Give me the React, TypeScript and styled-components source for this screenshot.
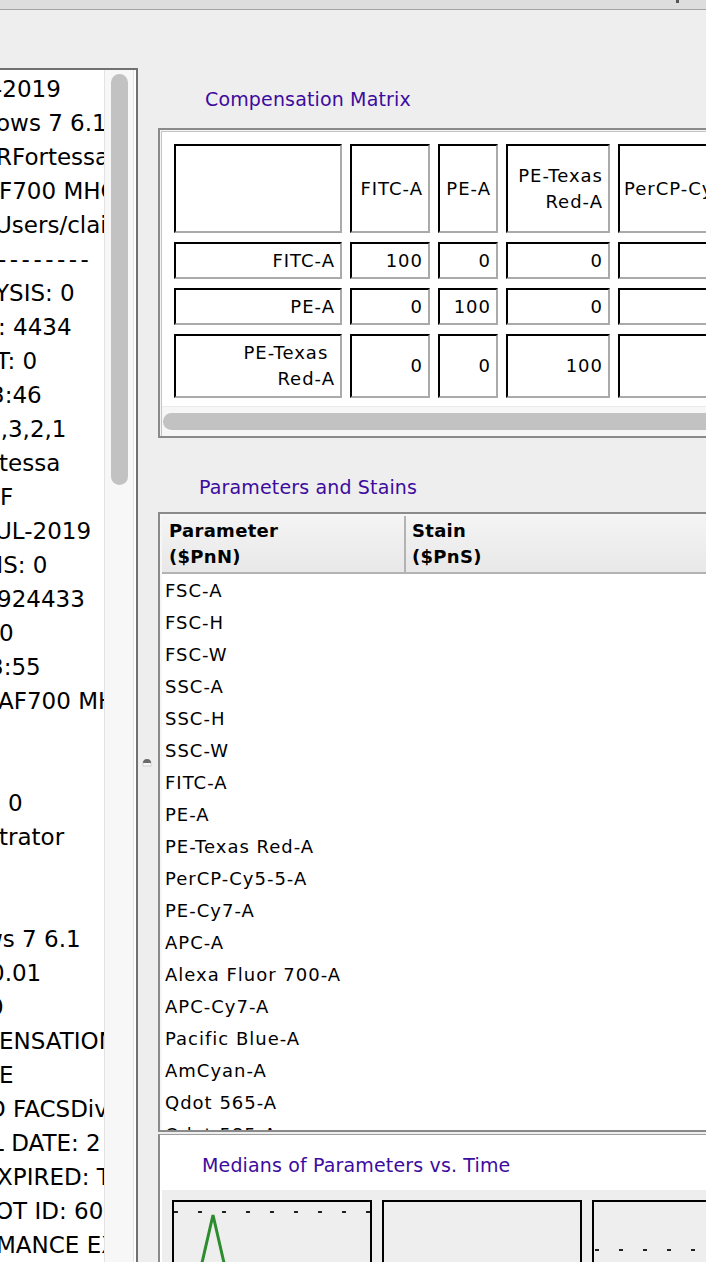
import React from "react";
import styled, { createGlobalStyle } from "styled-components";

const GlobalStyle = createGlobalStyle`
  html, body { margin: 0; padding: 0; background: #eeeeee; overflow: hidden; }
  body { font-family: "DejaVu Sans", "Liberation Sans", sans-serif; color: #000; }
`;

const PURPLE = "#3d0b9e";

const Window = styled.div`
  width: 706px;
  height: 1262px;
  overflow: hidden;
  display: flex;
  flex-direction: column;
  background: #eeeeee;
`;

const TitleStrip = styled.div`
  flex: none;
  height: 9px;
  background: #dddddd;
  border-bottom: 1px solid #a3a3a3;
  display: flex;
  justify-content: flex-end;
  padding-right: 27px;
`;

const Grip = styled.div`
  width: 3px;
  height: 3px;
  background: #555555;
`;

const Body = styled.div`
  flex: 1;
  min-height: 0;
  display: flex;
  padding-top: 58px;
`;

/* ---------- left info panel ---------- */
const InfoPanel = styled.div`
  flex: none;
  width: 138px;
  box-sizing: border-box;
  border-top: 2px solid #717171;
  border-right: 2px solid #717171;
  background: #ffffff;
  display: flex;
`;

const InfoText = styled.div`
  width: 104px;
  flex: none;
  overflow: hidden;
  padding-top: 2px;
  font-family: "DejaVu Sans", sans-serif;
  font-size: 23px;
  line-height: 34px;
`;

const InfoLine = styled.div<{ $shift: number; $spaced?: boolean }>`
  height: 34px;
  white-space: pre;
  text-indent: ${(p) => p.$shift}px;
  letter-spacing: ${(p) => (p.$spaced ? "3.5px" : "0")};
`;

const VTrack = styled.div`
  flex: none;
  width: 30px;
  box-sizing: border-box;
  background: #f7f7f7;
  border-left: 1px solid #e3e3e3;
  border-right: 1px solid #e3e3e3;
  padding: 4px 5px 0 6px;
  margin-right: 2px;
`;

const VThumb = styled.div`
  width: 17px;
  height: 411px;
  border-radius: 9px;
  background: #c2c2c2;
`;

/* ---------- split divider ---------- */
const Divider = styled.div`
  flex: none;
  width: 20px;
  padding: 690px 0 0 4px;
  box-sizing: border-box;
`;

const HandleSvg = styled.svg`
  display: block;
`;

/* ---------- right content ---------- */
const RightPane = styled.div`
  flex: 1;
  min-width: 0;
  overflow: hidden;
  display: flex;
  flex-direction: column;
  align-items: flex-start;
`;

const SectionTitle = styled.div<{ $top: number; $bottom: number; $left: number }>`
  flex: none;
  color: ${PURPLE};
  font-size: 19px;
  line-height: 24px;
  letter-spacing: 0.15px;
  white-space: nowrap;
  padding: ${(p) => `${p.$top}px 0 ${p.$bottom}px ${p.$left}px`};
`;

const MatrixPane = styled.div`
  flex: none;
  width: 640px;
  box-sizing: border-box;
  border: 2px solid #8a8a8a;
  padding: 1px 0 0 1px;
  background: #f4f4f4;
`;

const MatrixInner = styled.div`
  border-top: 1px solid #c4c4c4;
  border-left: 1px solid #c4c4c4;
  background: #ffffff;
`;

const MatrixGrid = styled.div`
  display: grid;
  grid-template-columns: 168px 80px 60px 104px 150px;
  grid-template-rows: 89px 37px 37px 64px;
  column-gap: 8px;
  row-gap: 9px;
  padding: 12px 0 8px 12px;
`;

const Cell = styled.div<{ $left?: boolean }>`
  box-sizing: border-box;
  border-style: solid;
  border-width: 2px;
  border-color: #000000 #aaaaaa #aaaaaa #000000;
  background: #ffffff;
  display: flex;
  align-items: center;
  justify-content: ${(p) => (p.$left ? "flex-start" : "flex-end")};
  text-align: ${(p) => (p.$left ? "left" : "right")};
  padding: 0 5px 0 4px;
  font-size: 18px;
  letter-spacing: 1px;
  line-height: 26px;
  white-space: pre;
  overflow: hidden;
`;

const HTrack = styled.div`
  height: 30px;
  box-sizing: border-box;
  background: #f6f6f6;
  border-top: 1px solid #ebebeb;
  padding: 6px 0 0 1px;
`;

const HThumb = styled.div`
  height: 17px;
  width: 700px;
  border-radius: 9px;
  background: #c2c2c2;
`;

const ParamTable = styled.div`
  flex: none;
  width: 640px;
  height: 620px;
  box-sizing: border-box;
  border: 2px solid #8a8a8a;
  padding: 2px 0 0 2px;
  background: #f6f6f6;
  display: flex;
  flex-direction: column;
`;

const HeaderRow = styled.div`
  flex: none;
  display: grid;
  grid-template-columns: 244px 1fr;
  height: 58px;
  box-sizing: border-box;
  border-bottom: 2px solid #b3b3b3;
  background: linear-gradient(#f4f4f4, #e8e8e8);
`;

const HeaderCell = styled.div<{ $pad: number; $divider?: boolean }>`
  display: flex;
  align-items: center;
  padding-left: ${(p) => p.$pad}px;
  border-right: ${(p) => (p.$divider ? "2px solid #b3b3b3" : "none")};
  font-weight: bold;
  font-size: 18px;
  letter-spacing: 0.3px;
  line-height: 26px;
  white-space: pre;
`;

const Rows = styled.div`
  flex: 1;
  min-height: 0;
  overflow: hidden;
  background: #ffffff;
`;

const Row = styled.div`
  height: 32px;
  line-height: 34px;
  padding-left: 3px;
  font-size: 18px;
  letter-spacing: 1px;
  white-space: nowrap;
`;

const MediansPanel = styled.div`
  flex: 1;
  width: 640px;
  margin-top: 2px;
  border-top: 1px solid #9d9d9d;
  border-left: 2px solid #8a8a8a;
  background: #ffffff;
  display: flex;
  flex-direction: column;
`;

const ChartArea = styled.div`
  flex: 1;
  margin-left: 2px;
  background: #eeeeee;
  padding: 10px 0 0 10px;
  display: flex;
  gap: 10px;
`;

const ChartBox = styled.div`
  flex: none;
  width: 200px;
  height: 300px;
  box-sizing: border-box;
  border: 2px solid #000000;
  background: #eeeeee;
`;

const ChartSvg = styled.svg`
  display: block;
  width: 196px;
  height: 296px;
`;

const infoLines: [string, number][] = [
  ["-2019", -6],
  ["ows 7 6.1", -4],
  ["RFortessa", -4],
  ["F700 MHC", -1],
  ["Users/clai", -5],
  ["--------", -2],
  ["YSIS: 0", -5],
  [": 4434", -2],
  ["T: 0", -4],
  ["3:46", -10],
  ["4,3,2,1", -14],
  ["tessa", -1],
  ["F", 0],
  ["UL-2019", -5],
  ["NS: 0", -14],
  ["924433", -3],
  ["0", -1],
  ["3:55", -11],
  ["AF700 MHC", -2],
  ["", 0],
  ["", 0],
  [": 0", -7],
  ["trator", -1],
  ["", 0],
  ["", 0],
  ["ws 7 6.1", -16],
  ["0.01", -10],
  ["0", -11],
  ["ENSATION", -1],
  ["E", -1],
  ["D FACSDiv", -12],
  ["L DATE: 2", -9],
  ["XPIRED: T", -3],
  ["OT ID: 60", -5],
  ["MANCE EX", -4],
];

const matrix: string[][] = [
  ["", "FITC-A", "PE-A", "PE-Texas\nRed-A", "PerCP-Cy5-5-A"],
  ["FITC-A", "100", "0", "0", ""],
  ["PE-A", "0", "100", "0", ""],
  ["PE-Texas \nRed-A", "0", "0", "100", ""],
];

const params = [
  "FSC-A",
  "FSC-H",
  "FSC-W",
  "SSC-A",
  "SSC-H",
  "SSC-W",
  "FITC-A",
  "PE-A",
  "PE-Texas Red-A",
  "PerCP-Cy5-5-A",
  "PE-Cy7-A",
  "APC-A",
  "Alexa Fluor 700-A",
  "APC-Cy7-A",
  "Pacific Blue-A",
  "AmCyan-A",
  "Qdot 565-A",
  "Qdot 585-A",
];

const DashLine = ({ y, x0 }: { y: number; x0: number }) => (
  <line x1={x0} y1={y} x2={196} y2={y} stroke="#222" strokeWidth={2} strokeDasharray="4 20" />
);

export default function App() {
  return (
    <Window>
      <GlobalStyle />
      <TitleStrip>
        <Grip />
      </TitleStrip>
      <Body>
        <InfoPanel>
          <InfoText>
            {infoLines.map(([t, s], i) => (
              <InfoLine key={i} $shift={s} $spaced={t.startsWith("---")}>
                {t}
              </InfoLine>
            ))}
          </InfoText>
          <VTrack>
            <VThumb />
          </VTrack>
        </InfoPanel>
        <Divider>
          <HandleSvg width="10" height="9" viewBox="0 0 10 9">
            <rect x="1" y="4" width="8" height="4" fill="#f6f6f6" stroke="#c8c8c8" strokeWidth="0.8" />
            <path d="M1 5 Q1 1 5 1 Q9 1 9 5 Z" fill="#6a6a6a" />
          </HandleSvg>
        </Divider>
        <RightPane>
          <SectionTitle $top={19} $bottom={17} $left={47}>
            Compensation Matrix
          </SectionTitle>
          <MatrixPane>
            <MatrixInner>
              <MatrixGrid>
                {matrix.flatMap((row, r) =>
                  row.map((v, c) => (
                    <Cell key={`${r}-${c}`} $left={c === 4}>
                      {v}
                    </Cell>
                  ))
                )}
              </MatrixGrid>
              <HTrack>
                <HThumb />
              </HTrack>
            </MatrixInner>
          </MatrixPane>
          <SectionTitle $top={37} $bottom={13} $left={41}>
            Parameters and Stains
          </SectionTitle>
          <ParamTable>
            <HeaderRow>
              <HeaderCell $pad={7} $divider>
                {"Parameter\n($PnN)"}
              </HeaderCell>
              <HeaderCell $pad={6}>{"Stain\n($PnS)"}</HeaderCell>
            </HeaderRow>
            <Rows>
              {params.map((p) => (
                <Row key={p}>{p}</Row>
              ))}
            </Rows>
          </ParamTable>
          <MediansPanel>
            <SectionTitle $top={18} $bottom={13} $left={42}>
              Medians of Parameters vs. Time
            </SectionTitle>
            <ChartArea>
              <ChartBox>
                <ChartSvg viewBox="0 0 196 296">
                  <DashLine y={10} x0={0} />
                  <polyline points="19,100 39,13 59,100" fill="none" stroke="#2d8c2d" strokeWidth={3} />
                </ChartSvg>
              </ChartBox>
              <ChartBox>
                <ChartSvg viewBox="0 0 196 296" />
              </ChartBox>
              <ChartBox>
                <ChartSvg viewBox="0 0 196 296">
                  <DashLine y={48} x0={1} />
                </ChartSvg>
              </ChartBox>
            </ChartArea>
          </MediansPanel>
        </RightPane>
      </Body>
    </Window>
  );
}
